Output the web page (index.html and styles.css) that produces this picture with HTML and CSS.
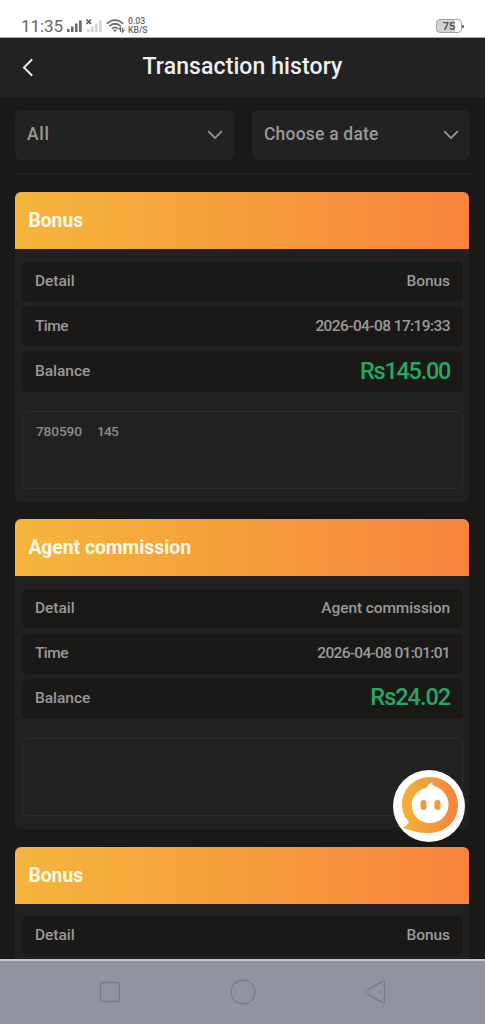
FILE: index.html
```html
<!DOCTYPE html>
<html lang="en">
<head>
<meta charset="utf-8">
<title>Transaction history</title>
<link rel="stylesheet" href="styles.css">
</head>
<body>
<div class="phone">
  <div class="status">
    <span class="clock">11:35</span>
    <svg class="signals" width="38" height="16" viewBox="0 0 38 16">
      <g fill="#6b6b6b"><rect x="0" y="11" width="2.6" height="3"/><rect x="4" y="8.500" width="2.600" height="5.500"/><rect x="8" y="5.500" width="2.600" height="8.500"/><rect x="12" y="2.500" width="2.700" height="11.500"/></g>
      <g fill="#d2d2d2"><rect x="20" y="11" width="2.600" height="3"/><rect x="24" y="8.500" width="2.600" height="5.500"/><rect x="28" y="5.500" width="2.600" height="8.500"/><rect x="32" y="2.500" width="2.600" height="11.500"/></g>
      <path d="M19.500 1.500l4.500 4.500M24 1.500l-4.500 4.500" stroke="#555" stroke-width="1.600"/>
    </svg>
    <svg class="wifi" width="20" height="16" viewBox="0 0 20 16" fill="none" stroke="#6b6b6b" stroke-width="1.700">
      <path d="M.8 5.600Q9 -1.500 17.200 5.600M3.300 8.200Q9 3.300 14.700 8.200M5.800 10.700Q9 8 12.200 10.700"/>
      <path d="M7 11.800h4L9 14.200z" fill="#6b6b6b" stroke="none"/>
      <path d="M14.500 14V9.500l-2 2.200M16.500 9.500V14l2-2.200" stroke-width="1.200"/>
    </svg>
    <span class="speed"><span>0.03</span><span>KB/S</span></span>
    <span class="battery"><span class="cell">75</span><span class="tip"></span></span>
  </div>
  <header class="top">
    <svg class="back" width="12" height="19" viewBox="0 0 12 19" fill="none" stroke="#e8e8e8" stroke-width="2"><path d="M10.200 1.200L2 9.500l8.200 8.300"/></svg>
    <h1 class="title">Transaction history</h1>
  </header>
  <main class="content">
    <div class="filters">
      <div class="select"><span class="all">All</span><svg width="16" height="10" viewBox="0 0 16 10" fill="none" stroke="#9a9a9a" stroke-width="1.700"><path d="M1.200 1.200L8 8l6.800-6.800"/></svg></div>
      <div class="select"><span class="date">Choose a date</span><svg width="16" height="10" viewBox="0 0 16 10" fill="none" stroke="#9a9a9a" stroke-width="1.700"><path d="M1.200 1.200L8 8l6.800-6.800"/></svg></div>
    </div>
    <div class="divider"></div>
    <section class="card">
      <h2 class="card-title">Bonus</h2>
      <div class="card-body">
        <div class="row"><span class="detail">Detail</span><span class="value">Bonus</span></div>
        <div class="row"><span class="time">Time</span><span class="stamp">2026-04-08 17:19:33</span></div>
        <div class="row"><span class="label">Balance</span><span class="amount">Rs145.00</span></div>
        <div class="note"><span>780590</span><span class="count">145</span></div>
      </div>
    </section>
    <section class="card">
      <h2 class="card-title">Agent commission</h2>
      <div class="card-body">
        <div class="row"><span class="detail">Detail</span><span class="value">Agent commission</span></div>
        <div class="row"><span class="time">Time</span><span class="stamp late">2026-04-08 01:01:01</span></div>
        <div class="row"><span class="label">Balance</span><span class="amount small">Rs24.02</span></div>
        <div class="note"></div>
      </div>
    </section>
    <section class="card">
      <h2 class="card-title">Bonus</h2>
      <div class="card-body">
        <div class="row"><span class="detail">Detail</span><span class="value">Bonus</span></div>
        <div class="row"></div>
      </div>
    </section>
  </main>
  <nav class="nav">
    <svg width="22" height="22" viewBox="0 0 22 22"><rect x="1.500" y="1.500" width="19" height="19" rx="2"/></svg>
    <svg width="26" height="26" viewBox="0 0 26 26"><circle cx="13" cy="13" r="11.800"/></svg>
    <svg width="22" height="24" viewBox="0 0 22 24"><path d="M18.200 1.500L2.200 10.500Q0 12 2.200 13.500L18.200 22.500Q20.500 23.200 20.500 20.800V3.200Q20.500.8 18.200 1.500z"/></svg>
  </nav>
  <svg class="support" width="72" height="72" viewBox="0 0 72 72">
    <defs><linearGradient id="orange"><stop offset="0" stop-color="#f3b136"/><stop offset="1" stop-color="#f58340"/></linearGradient></defs>
    <circle cx="36" cy="36" r="36" fill="#fff"/>
    <path fill="url(#orange)" d="M37 7C53 7 65 19 65 35S53 63 35 63C26 63 17 61 9.500 57.500C13 56.500 15 54.500 16 52C11.500 47 9 41 9 35C9 19 21 7 37 7z"/>
    <path fill="#fff" d="M34 17.500C34.500 15 36.500 12.800 39.500 11.500C38.500 13.800 39.500 15.500 42 16.300C50 19 55.500 26 55.500 34.500C55.500 45 47.500 53 37 53S18.700 45 18.700 34.500C18.700 26 25 19.500 34 17.500z"/>
    <g fill="#f19a3c"><rect x="27.500" y="30" width="6" height="10" rx="3"/><rect x="41.500" y="30" width="6" height="10" rx="3"/></g>
  </svg>
</div>
</body>
</html>
```
FILE: styles.css
```css
* { box-sizing: border-box; }
body { margin: 0; font-family: Roboto, "Liberation Sans", sans-serif; background: #1a1917; }
.phone { position: relative; display: flex; flex-direction: column; width: 485px; height: 1024px; overflow: hidden; background: #1a1917; }

.status { display: flex; align-items: flex-start; flex: none; height: 38px; padding: 15px 21px 0 21px; background: #fff; border-bottom: 1px solid #aaa; color: #666; }
.clock { width: 46px; font-size: 17px; line-height: 22px; letter-spacing: -.1px; }
.signals { margin-top: 3px; width: 38px; }
.wifi { margin-top: 3px; margin-left: 1px; }
.speed { display: flex; flex-direction: column; margin-left: 2px; padding-top: 2px; font-size: 8.700px; line-height: 8.500px; font-weight: 500; }
.battery { display: flex; align-items: center; margin-left: auto; margin-top: 4px; }
.cell { width: 26px; height: 14px; border: 1px solid #a2a2a2; border-radius: 4px; background: linear-gradient(90deg, #d2d2d2 75%, #fff 75%); text-align: center; font-size: 11px; line-height: 13px; font-weight: 700; color: #555; }
.tip { width: 2px; height: 3px; background: #777; }

.top { display: flex; align-items: center; flex: none; height: 59px; padding: 0 22px; background: #222; }
.back { flex: none; margin-top: -1px; }
.title { flex: 1; margin: -2px 12px 0 0; text-align: center; font-size: 23px; font-weight: 500; line-height: 30px; letter-spacing: .1px; color: #eee; }

.content { flex: 1; min-height: 0; overflow: hidden; padding: 13px 15px 0; }
.filters { display: grid; grid-template-columns: 219px 218px; gap: 18px; }
.select { display: flex; align-items: center; justify-content: space-between; height: 50px; padding: 0 11px 3px 12px; border-radius: 6px; background: #222; color: #999; font-size: 17.500px; font-weight: 500; letter-spacing: .2px; }
.all { letter-spacing: .7px; }
.select svg { margin-top: 3px; }
.divider { height: 2px; margin: 13px 0 17px 2px; background: #222; }

.card { height: 310px; margin: 0 .6px 17.400px .4px; border-radius: 6px; overflow: hidden; background: #212121; }
.card-title { height: 57px; margin: 0; padding-left: 13px; background: linear-gradient(90deg, #f5b53d, #f5a03a 45%, #f9833f); color: #fff9e8; font-size: 19.300px; font-weight: 700; line-height: 58px; }
.card-body { display: flex; flex-direction: column; gap: 5.700px; padding: 12.500px 6.500px 0; }
.row { display: flex; align-items: center; justify-content: space-between; height: 39.600px; padding: 0 13px 1.600px; border-radius: 5px; background: #1a1917; color: #999; font-size: 15.500px; font-weight: 500; }
.value { letter-spacing: -.1px; }
.time { letter-spacing: -.5px; }
.stamp { font-size: 15.500px; letter-spacing: -.6px; }
.late { letter-spacing: -.7px; }
.amount { font-size: 23.500px; line-height: 28px; letter-spacing: -1.250px; margin-right: -.3px; padding-bottom: 1px; color: #27a862; }
.small { letter-spacing: -1px; padding-bottom: 2px; }
.note { display: flex; gap: 15px; height: 78px; margin-top: 13.300px; padding: 11px 13px; border: 1px solid #2c2d2d; border-radius: 6px; color: #8c8c8c; font-size: 13.700px; line-height: 17px; font-weight: 500; letter-spacing: -.1px; }
.count { letter-spacing: -.8px; }

.nav { display: flex; align-items: center; justify-content: space-between; flex: none; height: 65px; padding: 0 99px 1px; background: #9193a2; border-top: 2px solid #c4c5ce; }
.nav svg { fill: none; stroke: #777989; stroke-width: 1.300; }
.support { position: absolute; left: 393px; top: 770px; }
```
